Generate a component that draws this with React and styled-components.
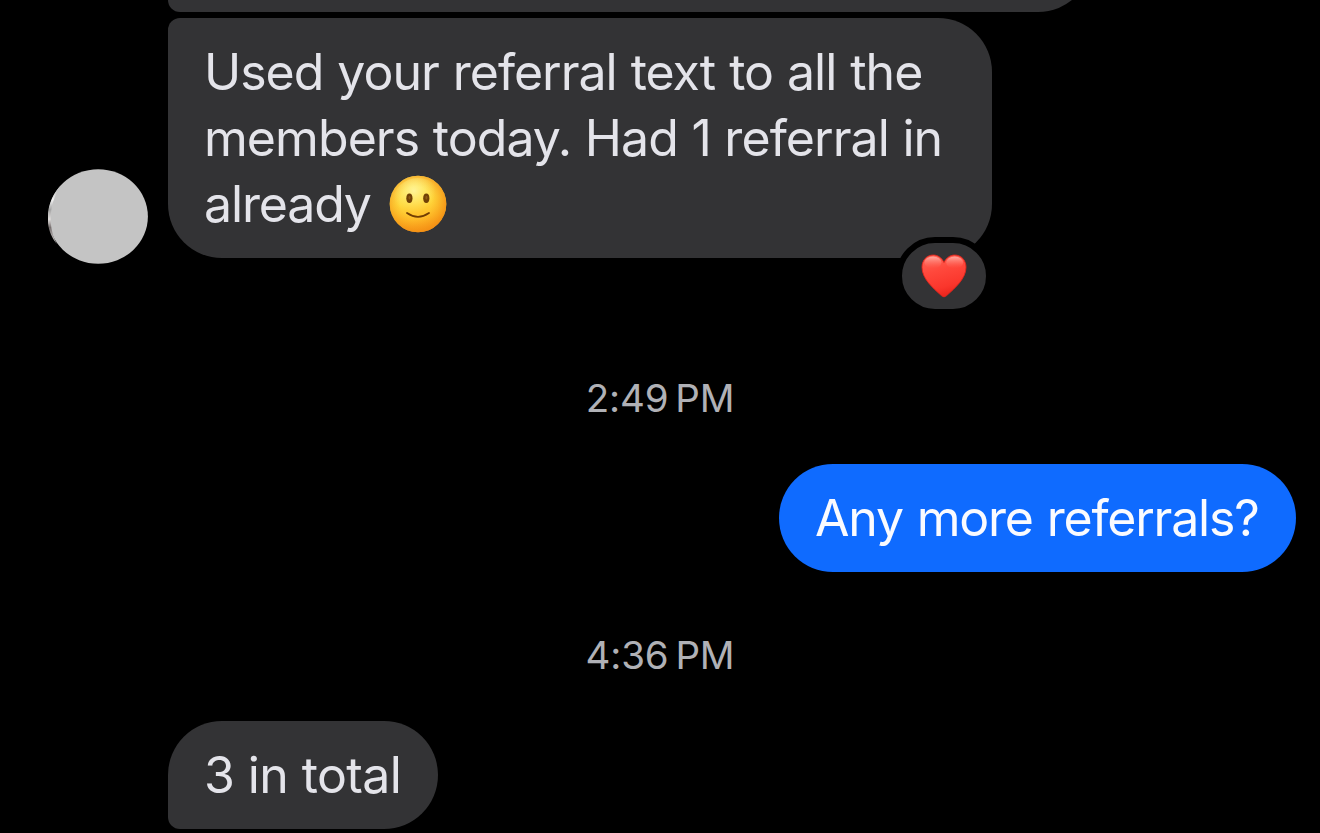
import React from 'react'
import styled, { createGlobalStyle } from 'styled-components'

const GlobalStyle=createGlobalStyle`
    *{
        box-sizing:border-box;
    }
    body{
        margin:0;
        background:#000;
        overflow:hidden;
    }
`;
const Chat=styled.div`
    width:1320px;
    height:833px;
    background:#000;
    overflow:hidden;
    display:flex;
    flex-direction:column;
    font-family:Inter, "Liberation Sans", sans-serif;
`;
const Row=styled.div`
    flex:none;
    display:flex;
    align-items:flex-end;
    justify-content:${({$sent})=>($sent ? 'flex-end' : 'flex-start')};
    padding:0 24px 0 48px;
    gap:20px;
    margin-top:${({$top})=>$top || 0}px;
`;
const AvatarSlot=styled.div`
    flex:none;
    width:100px;
    height:95px;
    margin-bottom:-6px;
    svg{
        display:block;
    }
`;
const Bubble=styled.div`
    position:relative;
    flex:none;
    width:${({$width})=>$width}px;
    min-height:108px;
    padding:21px 0 21px 36px;
    border-radius:${({$radius})=>$radius || '54px'};
    background:${({$sent})=>($sent ? '#0f6bff' : '#333335')};
    color:${({$sent})=>($sent ? '#fafbff' : '#e4e4ea')};
`;
const Line=styled.div`
    height:66px;
    line-height:66px;
    font-size:50px;
    letter-spacing:${({$track})=>$track || 0}px;
    word-spacing:${({$word})=>$word || 0}px;
    white-space:nowrap;
    svg{
        display:inline-block;
        vertical-align:-11px;
        margin-left:5px;
    }
`;
const Time=styled.div`
    flex:none;
    height:48px;
    line-height:48px;
    margin:${({$top})=>$top}px 0 42px;
    text-align:center;
    font-size:38.5px;
    letter-spacing:-0.15px;
    color:#b0b1b6;
`;
const Reaction=styled.div`
    position:absolute;
    right:0;
    bottom:-57px;
    width:96px;
    height:78px;
    border:6px solid #000;
    border-radius:39px;
    background:#333335;
    display:flex;
    justify-content:center;
    svg{
        margin-top:11px;
    }
`;

const Avatar = () => (
    <AvatarSlot>
        <svg width="100" height="95" viewBox="0 0 100 95">
            <defs>
                <linearGradient id="rim" x1="0" y1="0" x2="0" y2="1">
                    <stop offset="0.1" stopColor="#c4c4c4"/>
                    <stop offset="0.25" stopColor="#f2f2f2"/>
                    <stop offset="0.42" stopColor="#a4a4a4"/>
                    <stop offset="0.58" stopColor="#e0dddc"/>
                    <stop offset="0.72" stopColor="#777070"/>
                    <stop offset="0.9" stopColor="#b4b0b0"/>
                </linearGradient>
            </defs>
            <ellipse cx="50.2" cy="47.5" rx="49.7" ry="47.3" fill="#c4c4c4"/>
            <path d="M13 16C-4 34 -4 61 9 75C0 59 0 36 13 16Z" fill="url(#rim)"/>
        </svg>
    </AvatarSlot>
)

const Smile = () => (
    <svg width="58" height="58" viewBox="0 0 58 58">
        <defs>
            <linearGradient id="face" x1="0.4" y1="0" x2="0.6" y2="1">
                <stop offset="0" stopColor="#ffec62"/>
                <stop offset="0.45" stopColor="#ffd83c"/>
                <stop offset="0.75" stopColor="#ffbe2a"/>
                <stop offset="1" stopColor="#f9981c"/>
            </linearGradient>
            <radialGradient id="shade" cx="0.46" cy="0.47" r="0.55">
                <stop offset="0.5" stopColor="#f8a018" stopOpacity="0"/>
                <stop offset="1" stopColor="#f28c12" stopOpacity="0.85"/>
            </radialGradient>
            <radialGradient id="shine" cx="0.42" cy="0.25" r="0.42">
                <stop offset="0" stopColor="#fffbb8" stopOpacity="0.7"/>
                <stop offset="1" stopColor="#fff27a" stopOpacity="0"/>
            </radialGradient>
        </defs>
        <circle cx="29" cy="29" r="28.3" fill="url(#face)"/>
        <circle cx="29" cy="29" r="28.3" fill="url(#shade)"/>
        <circle cx="29" cy="29" r="26" fill="url(#shine)"/>
        <ellipse cx="20.4" cy="23.2" rx="3.1" ry="4.8" fill="#714106"/>
        <ellipse cx="37.3" cy="23.2" rx="3.1" ry="4.8" fill="#714106"/>
        <ellipse cx="20.5" cy="22.6" rx="1" ry="1.9" fill="#8f5b14"/>
        <ellipse cx="37.4" cy="22.6" rx="1" ry="1.9" fill="#8f5b14"/>
        <path d="M18 38Q29 45.6 40 38" fill="none" stroke="#713d03" strokeWidth="1.8" strokeLinecap="round"/>
    </svg>
)

const Heart = () => (
    <svg width="46" height="45" viewBox="0 0 46 45">
        <defs>
            <linearGradient id="heart" x1="0.3" y1="0" x2="0.6" y2="1">
                <stop offset="0" stopColor="#ff6254"/>
                <stop offset="0.35" stopColor="#ff483c"/>
                <stop offset="0.75" stopColor="#fa362c"/>
                <stop offset="1" stopColor="#e8221a"/>
            </linearGradient>
            <linearGradient id="gloss" x1="0" y1="0" x2="0" y2="1">
                <stop offset="0" stopColor="#ffbab2" stopOpacity="0.85"/>
                <stop offset="1" stopColor="#ff6a5c" stopOpacity="0"/>
            </linearGradient>
        </defs>
        <path d="M23 8.5C20.8 3.5 16.5 1 12.3 1C5.6 1 1 6.4 1 13.2C1 24.5 11.5 33.5 20.4 41.6Q23 44.2 25.6 41.6C34.5 33.5 45 24.5 45 13.2C45 6.4 40.4 1 33.7 1C29.5 1 25.2 3.5 23 8.5Z" fill="url(#heart)" stroke="#e1251c" strokeWidth="0.9"/>
        <ellipse cx="12" cy="8.4" rx="8.5" ry="6" fill="url(#gloss)"/>
        <ellipse cx="33.7" cy="8.4" rx="8.5" ry="6" fill="url(#gloss)"/>
    </svg>
)

const App = () => {
  return (
    <>
        <GlobalStyle/>
        <Chat>
            <Row $top={-96}>
                <AvatarSlot/>
                <Bubble $width={924} $radius="12px 54px 54px 12px"/>
            </Row>
            <Row $top={6}>
                <Avatar/>
                <Bubble $width={824} $radius="12px 54px 54px 54px">
                    <Line $track={-1} $word={0.9}>Used your referral text to all the</Line>
                    <Line $track={-0.93} $word={0.4}>members today. Had 1 referral in</Line>
                    <Line $track={-1.15}>already <Smile/></Line>
                    <Reaction><Heart/></Reaction>
                </Bubble>
            </Row>
            <Time $top={116}>2:49{'\u202f'}PM</Time>
            <Row $sent>
                <Bubble $sent $width={517}>
                    <Line $track={-1.2} $word={1}>Any more referrals?</Line>
                </Bubble>
            </Row>
            <Time $top={59}>4:36{'\u202f'}PM</Time>
            <Row>
                <AvatarSlot/>
                <Bubble $width={270} $radius="54px 54px 54px 12px">
                    <Line $track={-0.6}>3 in total</Line>
                </Bubble>
            </Row>
        </Chat>
    </>
  )
}

export default App
